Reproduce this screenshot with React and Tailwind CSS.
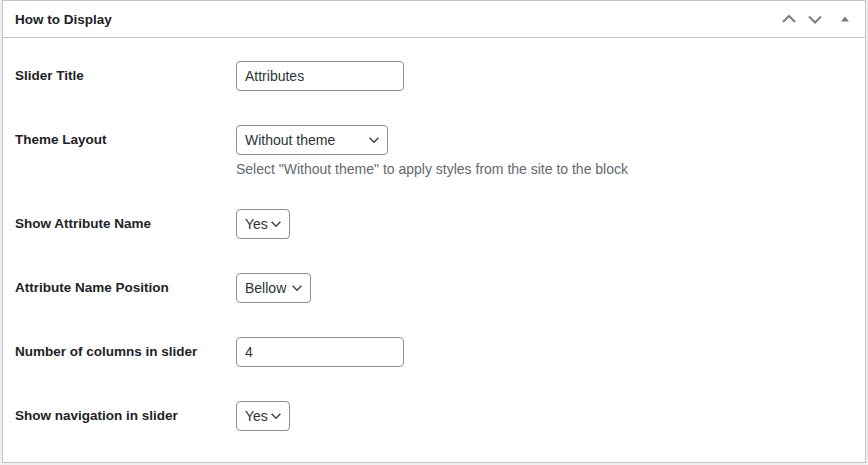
import React from 'react';

const font = { fontFamily: '"Segoe UI", "Liberation Sans", Arial, sans-serif' };

const Chevron = ({ className = '' }) => (
  <svg viewBox="0 0 16 16" className={className} fill="none" stroke="currentColor" strokeWidth="1.7">
    <path d="M3 5.5l5 5 5-5" />
  </svg>
);

const Select = ({ value, width }) => (
  <div
    className={`relative flex h-[30px] items-center rounded-[4px] border border-[#8c8f94] bg-white pl-2 text-[14px] text-[#2c3338] ${width}`}
  >
    <span>{value}</span>
    <Chevron className="absolute right-[6px] top-[7px] h-[14px] w-[14px] text-[#3c434a]" />
  </div>
);

const Input = ({ value }) => (
  <div className="flex h-[30px] w-[168px] items-center rounded-[4px] border border-[#8c8f94] bg-white px-2 text-[14px] text-[#2c3338]">
    {value}
  </div>
);

const Row = ({ label, children }) => (
  <div className="flex pt-4 pb-[18px]">
    <div className="flex h-[30px] w-[221px] shrink-0 items-center text-[13.5px] font-semibold text-[#1d2327]">
      {label}
    </div>
    <div>{children}</div>
  </div>
);

export default function App() {
  return (
    <div className="h-[465px] w-[868px] bg-[#f0f0f1] px-[2px]" style={font}>
      <div className="h-[463px] border border-[#c3c4c7] bg-white">
        <div className="flex h-[37px] items-center justify-between border-b border-[#c3c4c7] pl-[12px] pr-[12px]">
          <h2 className="pt-[2px] text-[13.5px] font-semibold text-[#1d2327]">How to Display</h2>
          <div className="flex items-center text-[#787c82]">
            <svg viewBox="0 0 16 16" className="h-[16px] w-[16px]" fill="none" stroke="currentColor" strokeWidth="2">
              <path d="M2 11l6-6 6 6" />
            </svg>
            <svg viewBox="0 0 16 16" className="ml-[10px] h-[16px] w-[16px]" fill="none" stroke="currentColor" strokeWidth="2">
              <path d="M2 5.5l6 6 6-6" />
            </svg>
            <svg viewBox="0 0 16 16" className="ml-[14px] h-[16px] w-[16px]" fill="currentColor">
              <path d="M4 10.5L8 5.5l4 5z" />
            </svg>
          </div>
        </div>
        <div className="pl-[12px] pt-[7px]">
          <Row label="Slider Title">
            <Input value="Attributes" />
          </Row>
          <div className="flex pt-4 pb-[14px]">
            <div className="flex h-[30px] w-[221px] shrink-0 items-center text-[13.5px] font-semibold text-[#1d2327]">
              Theme Layout
            </div>
            <div>
              <Select value="Without theme" width="w-[152px]" />
              <p className="mt-1 text-[14px] leading-5 text-[#646970]">
                Select "Without theme" to apply styles from the site to the block
              </p>
            </div>
          </div>
          <Row label="Show Attribute Name">
            <Select value="Yes" width="w-[54px]" />
          </Row>
          <Row label="Attribute Name Position">
            <Select value="Bellow" width="w-[75px]" />
          </Row>
          <Row label="Number of columns in slider">
            <Input value="4" />
          </Row>
          <Row label="Show navigation in slider">
            <Select value="Yes" width="w-[54px]" />
          </Row>
        </div>
      </div>
    </div>
  );
}
